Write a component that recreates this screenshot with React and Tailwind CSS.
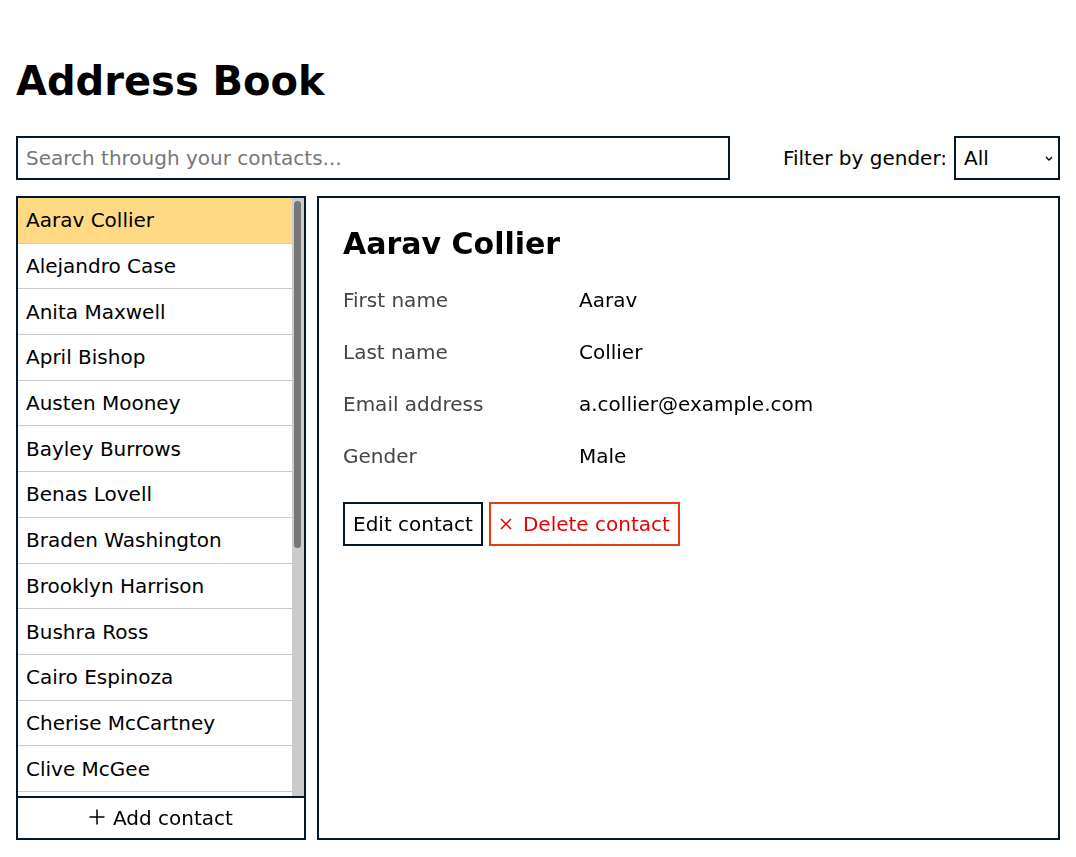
import { useState } from "react"

const contacts = [
  { first: "Aarav", last: "Collier", email: "a.collier@example.com", gender: "Male" },
  { first: "Alejandro", last: "Case", email: "a.case@example.com", gender: "Male" },
  { first: "Anita", last: "Maxwell", email: "a.maxwell@example.com", gender: "Female" },
  { first: "April", last: "Bishop", email: "a.bishop@example.com", gender: "Female" },
  { first: "Austen", last: "Mooney", email: "a.mooney@example.com", gender: "Male" },
  { first: "Bayley", last: "Burrows", email: "b.burrows@example.com", gender: "Female" },
  { first: "Benas", last: "Lovell", email: "b.lovell@example.com", gender: "Male" },
  { first: "Braden", last: "Washington", email: "b.washington@example.com", gender: "Male" },
  { first: "Brooklyn", last: "Harrison", email: "b.harrison@example.com", gender: "Female" },
  { first: "Bushra", last: "Ross", email: "b.ross@example.com", gender: "Female" },
  { first: "Cairo", last: "Espinoza", email: "c.espinoza@example.com", gender: "Male" },
  { first: "Cherise", last: "McCartney", email: "c.mccartney@example.com", gender: "Female" },
  { first: "Clive", last: "McGee", email: "c.mcgee@example.com", gender: "Male" },
  { first: "Colton", last: "Bennett", email: "c.bennett@example.com", gender: "Male" },
  { first: "Darcy", last: "Holmes", email: "d.holmes@example.com", gender: "Female" },
  { first: "Eliza", last: "Warner", email: "e.warner@example.com", gender: "Female" },
  { first: "Felix", last: "Hartley", email: "f.hartley@example.com", gender: "Male" },
  { first: "Georgia", last: "Flynn", email: "g.flynn@example.com", gender: "Female" },
  { first: "Harvey", last: "Doyle", email: "h.doyle@example.com", gender: "Male" },
  { first: "Isla", last: "Morgan", email: "i.morgan@example.com", gender: "Female" },
  { first: "Jasper", last: "Kent", email: "j.kent@example.com", gender: "Male" },
  { first: "Kiera", last: "Walsh", email: "k.walsh@example.com", gender: "Female" },
]

export default function App() {
  const [selected, setSelected] = useState(0)
  const [query, setQuery] = useState("")
  const [gender, setGender] = useState("All")

  const contact = contacts[selected]

  // Rows shown in the details panel
  const fields = [
    ["First name", contact.first],
    ["Last name", contact.last],
    ["Email address", contact.email],
    ["Gender", contact.gender],
  ]

  return (
    <div className="min-h-screen bg-white px-4 pt-[58px] text-[20px] text-black font-['DejaVu_Sans',sans-serif]">
      <h1 className="text-[40px] leading-[47px] font-bold mb-[31px]">Address Book</h1>

      {/* Search + filter */}
      <div className="flex items-center justify-between mb-4">
        <input
          value={query}
          onChange={(e) => setQuery(e.target.value)}
          placeholder="Search through your contacts..."
          className="w-[714px] h-[44px] border-2 border-[#04182b] px-2 text-[20px] placeholder:text-[#777] outline-none"
        />
        <label className="flex items-center gap-[7px]">
          <span>Filter by gender:</span>
          <div className="relative">
            <select
              value={gender}
              onChange={(e) => setGender(e.target.value)}
              className="appearance-none w-[106px] h-[44px] border-2 border-[#04182b] bg-white px-2 text-[20px] outline-none"
            >
              <option>All</option>
              <option>Male</option>
              <option>Female</option>
            </select>
            <svg width="8" height="5" viewBox="0 0 8 5" className="absolute right-[7px] top-[20px] pointer-events-none">
              <path d="M1 1l3 3 3-3" stroke="#000" strokeWidth="1.4" fill="none" />
            </svg>
          </div>
        </label>
      </div>

      <div className="flex gap-[11px] h-[644px]">
        {/* Contact list */}
        <div className="w-[290px] flex flex-col border-2 border-[#04182b]">
          <div className="flex-1 flex min-h-0">
            <ul className="flex-1 overflow-y-auto [scrollbar-width:none]">
              {contacts.map((c, i) => (
                <li
                  key={c.email}
                  onClick={() => setSelected(i)}
                  className={
                    i === selected
                      ? "h-[45.7px] flex items-center px-2 border-b border-[#ccc] bg-[#ffd983] cursor-pointer"
                      : "h-[45.7px] flex items-center px-2 border-b border-[#ccc] bg-white cursor-pointer"
                  }
                >
                  {c.first} {c.last}
                </li>
              ))}
            </ul>
            {/* scrollbar track */}
            <div className="w-[12px] bg-[#ccc] pt-[3px] pl-[2px]">
              <div className="w-[7px] h-[347px] rounded-full bg-[#777]" />
            </div>
          </div>
          <button className="h-[42px] border-t-2 border-[#04182b] flex items-center justify-center gap-2 bg-white">
            <svg width="16" height="16" viewBox="0 0 16 16" className="mb-[3px]">
              <path d="M8 0.5v15M0.5 8h15" stroke="#000" strokeWidth="1.5" fill="none" />
            </svg>
            <span>Add contact</span>
          </button>
        </div>

        {/* Details */}
        <div className="flex-1 border-2 border-[#04182b] p-6">
          <h2 className="text-[30px] font-bold leading-[35px] mt-1 mb-[13px]">
            {contact.first} {contact.last}
          </h2>
          <div className="grid grid-cols-[236px_1fr]">
            {fields.map(([label, value]) => (
              <div key={label} className="contents">
                <div className="h-[52px] flex items-center text-[#444]">{label}</div>
                <div className="h-[52px] flex items-center">{value}</div>
              </div>
            ))}
          </div>
          <div className="flex gap-[6px] mt-5">
            <button className="h-[44px] border-2 border-[#04182b] px-2 bg-white">Edit contact</button>
            <button className="h-[44px] border-2 border-[#e63a12] pl-[9px] pr-2 bg-white text-[#e80000] flex items-center gap-[11px]">
              <svg width="12" height="12" viewBox="0 0 12 12">
                <path d="M1 1l10 10M11 1L1 11" stroke="#e80000" strokeWidth="1.5" fill="none" />
              </svg>
              <span>Delete contact</span>
            </button>
          </div>
        </div>
      </div>
    </div>
  )
}
